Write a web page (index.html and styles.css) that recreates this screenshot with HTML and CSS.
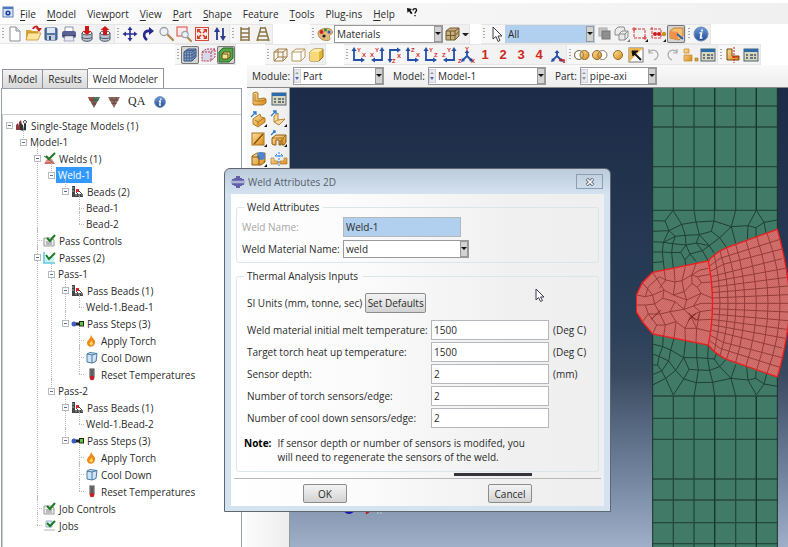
FILE: index.html
```html
<!DOCTYPE html>
<html lang="en">
<head>
  <meta charset="UTF-8">
  <title>Weld Modeler</title>
  <meta name="viewport" content="width=device-width, initial-scale=1.0">
  <link rel="stylesheet" href="styles.css">
</head>
<body>
  <!-- icon sheet -->
  <svg class="sheet" width="0" height="0" aria-hidden="true">
    <defs>
      <linearGradient id="gold" x1="0" y1="0" x2="1" y2="1">
        <stop offset="0" stop-color="#ffe0a0"/><stop offset="1" stop-color="#d98a14"/>
      </linearGradient>
      <linearGradient id="steel" x1="0" y1="0" x2="0" y2="1">
        <stop offset="0" stop-color="#6f9bd8"/><stop offset="1" stop-color="#1f4a94"/>
      </linearGradient>
      <pattern id="dots" width="6" height="6" patternUnits="userSpaceOnUse">
        <rect width="6" height="6" fill="#d5706c"/><rect width="3" height="3" fill="#c96966"/><rect x="3" y="3" width="3" height="3" fill="#c96966"/>
      </pattern>
    </defs>
    <symbol id="i-app" viewBox="0 0 12 12"><rect x="1" y="1" width="10" height="10" fill="#d5e4f4" stroke="#5c7fb8"/><rect x="1" y="1" width="10" height="2" fill="#4c78c0"/><circle cx="6" cy="7" r="2.600" fill="#1e3fa0"/><circle cx="6" cy="7" r=".9" fill="#fff"/></symbol>
    <symbol id="i-whats" viewBox="0 0 12 12"><path d="M1 2l5 1-1.500 1.300 2 3-1.500 1-2-3L1.500 7z" fill="#111"/><path d="M7 4.500C7 2 11 2 10.500 4.500 10 6 9 6 9 7.500M9 9v1.200" fill="none" stroke="#111" stroke-width="1.400"/></symbol>
    <symbol id="i-new" viewBox="0 0 18 18"><path d="M4 2h6l4 4v10H4z" fill="#fff" stroke="#8a8f98"/><path d="M10 2v4h4" fill="#dde" stroke="#8a8f98"/></symbol>
    <symbol id="i-open" viewBox="0 0 18 18"><path d="M2 5h5l1 1h6v9H2z" fill="#d9a336"/><path d="M4 8h13l-3 7H2z" fill="#ffe7a0" stroke="#c08a1c" stroke-width=".7"/><path d="M9 4c1-3 4-3 5-1" fill="none" stroke="#c81e1e" stroke-width="2"/><path d="M12 3h6l-3 4z" fill="#c81e1e"/></symbol>
    <symbol id="i-save" viewBox="0 0 18 18"><rect x="3" y="3" width="12" height="12" rx="1" fill="#5576a8" stroke="#34527f"/><rect x="5" y="3" width="8" height="5" fill="#dfe7f2"/><rect x="5" y="10" width="8" height="5" fill="#c3cedd"/><rect x="7" y="11" width="2" height="4" fill="#34527f"/></symbol>
    <symbol id="i-print" viewBox="0 0 18 18"><path d="M5 2h8v5H5z" fill="#fff" stroke="#8890a4"/><rect x="2" y="6" width="14" height="7" rx="2" fill="#5b6196"/><rect x="3" y="10" width="12" height="1" fill="#2f3562"/><path d="M5 11h8l1 5H4z" fill="#e8ebf4" stroke="#8890a4" stroke-width=".7"/></symbol>
    <symbol id="i-dbdown" viewBox="0 0 18 18"><path d="M4 8v6c0 3 10 3 10 0V8" fill="#bcc4cf" stroke="#4b5666"/><ellipse cx="9" cy="8" rx="5" ry="2" fill="#eee" stroke="#4b5666"/><path d="M4 12c0 2 10 2 10 0" fill="none" stroke="#4b5666"/><path d="M7 1h4v5h2.500L9 10 4.500 6H7z" fill="#d01818"/></symbol>
    <symbol id="i-dbup" viewBox="0 0 18 18"><path d="M4 8v6c0 3 10 3 10 0V8" fill="#bcc4cf" stroke="#4b5666"/><ellipse cx="9" cy="8" rx="5" ry="2" fill="#eee" stroke="#4b5666"/><path d="M4 12c0 2 10 2 10 0" fill="none" stroke="#4b5666"/><path d="M7 10h4V5h2.500L9 1 4.500 5H7z" fill="#d01818"/></symbol>
    <symbol id="i-pan" viewBox="0 0 18 18"><path d="M9 4v10M4 9h10" stroke="#2b2f9a" stroke-width="1.600"/><path d="M9 1.500L11.500 5h-5zM9 16.500L6.500 13h5zM1.500 9L5 6.500v5zM16.500 9L13 11.500v-5z" fill="#2b2f9a"/></symbol>
    <symbol id="i-rotate" viewBox="0 0 18 18"><path d="M8 15C3 11 5 5 11 6" fill="none" stroke="#252a8c" stroke-width="2.600"/><path d="M10 2l5 4-5 4z" fill="#252a8c"/></symbol>
    <symbol id="i-zoom" viewBox="0 0 18 18"><path d="M10 9l6 6" stroke="#b08b54" stroke-width="2.400" stroke-linecap="round"/><circle cx="7" cy="6.500" r="4" fill="#eef3f8" stroke="#9aa1aa" stroke-width="1.300"/></symbol>
    <symbol id="i-zoombox" viewBox="0 0 18 18"><rect x="2" y="2" width="10" height="9" fill="#fbeaea" stroke="#d64a3c"/><path d="M12 12l4 4" stroke="#b08b54" stroke-width="2.200" stroke-linecap="round"/><circle cx="10" cy="9.500" r="3.200" fill="#eef3f8" stroke="#9aa1aa" stroke-width="1.200"/></symbol>
    <symbol id="i-fit" viewBox="0 0 18 18"><rect x="2.500" y="2.500" width="13" height="13" fill="#fbeae6" stroke="#d64a3c"/><path d="M5 5l3 3M13 5l-3 3M5 13l3-3M13 13l-3-3" stroke="#d43a26" stroke-width="1.500"/><path d="M4 4h4L4 8zM14 4h-4l4 4zM4 14h4l-4-4zM14 14h-4l4-4z" fill="#d43a26"/></symbol>
    <symbol id="i-updown" viewBox="0 0 18 18"><path d="M6 15V6M12 3v9" stroke="#2b3a8c" stroke-width="1.800"/><path d="M6 2l3 5H3zM12 16l-3-5h6z" fill="#2b3a8c"/></symbol>
    <symbol id="i-ladder" viewBox="0 0 18 18"><path d="M5 2v14M13 2v14M5 4h8M5 8h8M5 12h8M5 15h8" stroke="#8a7544" stroke-width="1.500"/></symbol>
    <symbol id="i-ladder2" viewBox="0 0 18 18"><path d="M7 2L3 16M11 2l4 14M6.500 3h5M5.500 7h7M4.500 11h9M3.500 15h11" stroke="#8a7544" stroke-width="1.500"/></symbol>
    <symbol id="i-palette" viewBox="0 0 18 18"><path d="M2 8C2 3 16 1 16.500 7c.3 3-3 1.500-3 3.500 0 3 2 5-3 5C5 15.500 2 12 2 8z" fill="#e2b978" stroke="#9a713a" stroke-width=".7"/><circle cx="5.500" cy="7" r="2" fill="#cf2222"/><circle cx="9.500" cy="5" r="1.600" fill="#2a9a38"/><circle cx="13" cy="7" r="1.500" fill="#2c56c8"/><circle cx="8" cy="11" r="1.600" fill="#222"/></symbol>
    <symbol id="i-cube-brown" viewBox="0 0 18 18"><path d="M3 6l4-3h9v8l-4 4H3z" fill="#c9ad7c" stroke="#6f5a33"/><path d="M3 6h9v9M12 6l4-3M7.500 6v9M3 10.500h9l4-4" fill="none" stroke="#6f5a33"/></symbol>
    <symbol id="i-arrow" viewBox="0 0 18 18"><path d="M6 2v12l3-2.500 2 5 2-1-2-4.500h4z" fill="#fff" stroke="#3c3c48"/></symbol>
    <symbol id="i-overlap" viewBox="0 0 18 18"><rect x="4" y="3" width="8" height="8" fill="#c6c6c6" stroke="#aaa"/><rect x="7" y="6" width="8" height="8" fill="#8f8f8f" stroke="#777"/></symbol>
    <symbol id="i-cubes-grey" viewBox="0 0 18 18"><path d="M2 5l3-3h6l1 3v5H2z" fill="#ebebeb" stroke="#8c8c8c"/><path d="M6 9l3-3h6v6l-3 3H6z" fill="#ebebeb" stroke="#8c8c8c"/><path d="M6 9h6v6M12 9l3-3" fill="none" stroke="#8c8c8c"/><path d="M17 14v3h-3z" fill="#777"/></symbol>
    <symbol id="i-selrect" viewBox="0 0 18 18"><rect x="3" y="4" width="11" height="9" fill="none" stroke="#d43a3a" stroke-dasharray="3 1"/><path d="M1 4h4M3 2v4M12 13h4M14 11v4" stroke="#d43a3a"/><path d="M17 14v3h-3z" fill="#111"/></symbol>
    <symbol id="i-seldots" viewBox="0 0 18 18"><path d="M3 2v12M1 4h11v9H3" fill="none" stroke="#d43a3a" stroke-dasharray="3 1"/><circle cx="6" cy="9" r="2" fill="#d01818"/><circle cx="10" cy="9" r="2" fill="#d01818"/><circle cx="15" cy="9" r="2.200" fill="#c79222"/><path d="M17 14v3h-3z" fill="#111"/></symbol>
    <symbol id="i-pick" viewBox="0 0 18 18"><path d="M3 6l4-3h9v8l-4 4-9-2z" fill="#f7bf6b" stroke="#b06f16" stroke-width=".8"/><path d="M3 6l8 1v8l-8-2z" fill="#f2924a"/><path d="M10 9l6 5" stroke="#2a62b8" stroke-width="2"/></symbol>
    <symbol id="i-info" viewBox="0 0 18 18"><circle cx="9" cy="9" r="7" fill="url(#steel)" stroke="#6b88b4"/><path d="M10 4.500v2M7.500 8h2l-1 5h2" fill="none" stroke="#fff" stroke-width="1.700"/></symbol>
    <symbol id="i-cube-mesh" viewBox="0 0 18 18"><path d="M3 6l4-3h8v8l-4 4H3z" fill="#8ea9cf" stroke="#35507f"/><path d="M3 6h8v9M11 6l4-3M5.700 6v9M8.300 6v9M3 9h8l4-3M3 12h8l4-3M5 4.500h8v8" fill="none" stroke="#35507f" stroke-width=".8"/></symbol>
    <symbol id="i-cube-red" viewBox="0 0 18 18"><path d="M3 6l4-3h9v8l-4 4H3z" fill="#d6d9ea" stroke="#c63a4c" stroke-dasharray="2 1"/><path d="M3 6h9v9M12 6l4-3" fill="none" stroke="#c63a4c" stroke-dasharray="2 1"/></symbol>
    <symbol id="i-cube-green" viewBox="0 0 18 18"><path d="M2 6l4-4h10v10l-4 4H2z" fill="#54a84a" stroke="#20641e"/><path d="M5 8l2-2h6v5l-2 2H5z" fill="#f2e48a" stroke="#5c4a14"/><path d="M5 8h6v5" fill="none" stroke="#5c4a14"/></symbol>
    <symbol id="i-wire" viewBox="0 0 18 18"><path d="M3 6h9v9H3zM7 3h9v8H7zM3 6l4-3M12 6l4-3M12 15l4-4M3 15l4-4" fill="none" stroke="#a07c3c"/></symbol>
    <symbol id="i-hidden" viewBox="0 0 18 18"><path d="M3 6l4-3h9v8l-4 4H3z" fill="#fff" stroke="#b8975a"/><path d="M3 6h9v9M12 6l4-3" fill="none" stroke="#b8975a"/></symbol>
    <symbol id="i-shaded" viewBox="0 0 18 18"><path d="M3 6l4-3h9v8l-4 4H3z" fill="#e0b53c" stroke="#94701a"/><path d="M3 6h9v9H3z" fill="#f9d977"/><path d="M3 6l4-3h9l-4 3z" fill="#fdeaa4"/></symbol>
    <symbol id="i-ax-ur" viewBox="0 0 18 18"><path d="M4 4v10h7" fill="none" stroke="#2450a8" stroke-width="1.800"/><path d="M4 1l2.500 4h-5zM15 14l-4 2.500v-5z" fill="#2450a8"/></symbol>
    <symbol id="i-ax-ul" viewBox="0 0 18 18"><path d="M14 4v10H7" fill="none" stroke="#2450a8" stroke-width="1.800"/><path d="M14 1l2.500 4h-5zM3 14l4 2.500v-5z" fill="#2450a8"/></symbol>
    <symbol id="i-ax-dr" viewBox="0 0 18 18"><path d="M4 14V4h7" fill="none" stroke="#2450a8" stroke-width="1.800"/><path d="M4 17l2.500-4h-5zM15 4l-4 2.500v-5z" fill="#2450a8"/></symbol>
    <symbol id="i-iso" viewBox="0 0 18 18"><path d="M9 6v4l-4 4M9 10l4 4" fill="none" stroke="#2450a8" stroke-width="1.800"/><path d="M9 4l2.500 3h-5zM3 16l1-4 3 3zM15 16l-4-1 3-3z" fill="#2450a8"/></symbol>
    <symbol id="i-both" viewBox="0 0 18 18"><circle cx="6" cy="9" r="4.500" fill="#fff" stroke="#8a7c5c"/><circle cx="11.500" cy="9" r="4.500" fill="url(#gold)" stroke="#8a6a2c"/><circle cx="6" cy="9" r="4.500" fill="none" stroke="#8a7c5c"/></symbol>
    <symbol id="i-remove" viewBox="0 0 18 18"><circle cx="11.500" cy="9" r="4.500" fill="#fff" stroke="#8a7c5c"/><circle cx="6" cy="9" r="4.500" fill="url(#gold)" stroke="#8a6a2c"/><path d="M9 5.500c-3 2-3 5 0 7" fill="none" stroke="#8a7c5c"/></symbol>
    <symbol id="i-one" viewBox="0 0 18 18"><circle cx="9" cy="9" r="4.500" fill="url(#gold)" stroke="#9a6c1c"/></symbol>
    <symbol id="i-replace" viewBox="0 0 18 18"><rect x="2" y="2" width="14" height="14" fill="#fff" stroke="#777"/><path d="M2 2h14L2 16z" fill="#eab24c"/><path d="M7 7l7 7" stroke="#111" stroke-width="2"/><path d="M5 5h6l-3 2-2 3z" fill="#111" stroke="#111"/></symbol>
    <symbol id="i-undo" viewBox="0 0 18 18"><path d="M4 6c4-4 9-1 9 3 0 3-2 4-4 5M4 3v4h4" fill="none" stroke="#a9a9a9" stroke-width="1.200"/></symbol>
    <symbol id="i-redo" viewBox="0 0 18 18"><path d="M14 6c-4-4-9-1-9 3 0 3 2 4 4 5M14 3v4h-4" fill="none" stroke="#a9a9a9" stroke-width="1.200"/></symbol>
    <symbol id="i-partset" viewBox="0 0 18 18"><path d="M3 3h5v4H3zM3 9h8v6H3z" fill="url(#gold)" stroke="#c08428" stroke-width=".7"/><rect x="14" y="12" width="3" height="3" fill="#d8a040" stroke="#a87420" stroke-width=".6"/></symbol>
    <symbol id="i-table" viewBox="0 0 18 18"><rect x="2" y="3" width="14" height="12" fill="#d8d6bc" stroke="#4f6275"/><rect x="2" y="3" width="14" height="3" fill="#2c6cab"/><path d="M4 9h2M4 12h2M8 9h3M12 9h2M8 12h3M12 12h2" stroke="#40556c" stroke-width="1.400"/></symbol>
    <symbol id="i-section" viewBox="0 0 18 18"><path d="M3 3h5v7h7v4H3z" fill="url(#gold)" stroke="#714d10"/><path d="M10 1v16" stroke="#d01818" stroke-dasharray="2 1"/><path d="M8 11h7" stroke="#d01818"/></symbol>
    <symbol id="i-part" viewBox="0 0 18 18"><path d="M3 3l3-1 2 1v6l6-1 2 1v4l-3 2H4l-1-1z" fill="url(#gold)" stroke="#9a6614" stroke-width=".8"/><path d="M5 4v7h8M13 11l3-2" fill="none" stroke="#9a6614" stroke-width=".7"/></symbol>
    <symbol id="i-extrude" viewBox="0 0 18 18"><path d="M3 9l7-5 1 3 4 1v4l-7 5-5-3z" fill="url(#gold)" stroke="#9a6614" stroke-width=".8"/><path d="M5 10l3 2 6-4M8 12v3" fill="none" stroke="#9a6614" stroke-width=".8"/><path d="M1 7l5-5M3 2h3v3" fill="none" stroke="#2a7ad0" stroke-width="1.300"/><path d="M17 14v3h-3z" fill="#111"/></symbol>
    <symbol id="i-shell" viewBox="0 0 18 18"><path d="M4 6l4-3v7l7-1-6 6-5-3z" fill="#f8d9a0" stroke="#b07a28" stroke-width=".9"/><path d="M4 12l4-2" stroke="#b07a28" stroke-width=".8"/><path d="M1 6l5-5M3 1h3v3" fill="none" stroke="#2a7ad0" stroke-width="1.300"/><path d="M17 14v3h-3z" fill="#111"/></symbol>
    <symbol id="i-wireline" viewBox="0 0 18 18"><rect x="2" y="3" width="12" height="12" fill="url(#gold)" stroke="#a87420"/><path d="M4 14L13 4" stroke="#7c4d08" stroke-width="1.200"/><path d="M17 14v3h-3z" fill="#111"/></symbol>
    <symbol id="i-cut" viewBox="0 0 18 18"><path d="M2 8l4-3h10v7l-2 3h-2v-5h-1v5H9v-5H6v5H4l-2-1z" fill="url(#gold)" stroke="#85540c" stroke-width=".9"/><path d="M2 8h11l3-3M13 8v2" fill="none" stroke="#85540c" stroke-width=".7"/><path d="M1 5l4-4M3 1h2v2" fill="none" stroke="#2a7ad0" stroke-width="1.300"/><path d="M17 14v3h-3z" fill="#111"/></symbol>
    <symbol id="i-round" viewBox="0 0 18 18"><path d="M2 6l5-3h8v9l-4 3H2z" fill="url(#gold)" stroke="#85540c" stroke-width=".9"/><circle cx="11" cy="6" r="4" fill="#4f86cf"/><path d="M2 7h7v8" fill="none" stroke="#85540c"/><path d="M17 14v3h-3z" fill="#111"/></symbol>
    <symbol id="i-mirror" viewBox="0 0 18 18"><path d="M1 8h3v3h4v3H1zM17 8h-3v3h-4v3h7z" fill="url(#gold)" stroke="#b07a28" stroke-width=".7"/><path d="M9 2v15" stroke="#2a8ae0" stroke-dasharray="2 1"/><path d="M5 6h8M5 6l2-2M13 6l-2-2" fill="none" stroke="#2a8ae0"/></symbol>
    <symbol id="i-tri1" viewBox="0 0 12 12"><path d="M0 1h12L6 12z" fill="#7c5a50"/><path d="M0 1h5l1 4H2z" fill="#a34a44"/><path d="M6 1h6L9 6H6z" fill="#3f7f5c"/><path d="M4 8h4M1.500 4h9" stroke="#4c3a36" stroke-width=".7"/></symbol>
    <symbol id="i-tri2" viewBox="0 0 12 12"><path d="M0 1h12L6 12z" fill="#8e6a60"/><path d="M1.500 4h9M3.500 7.500h5M4 1v3M8 1v3M6 4v4" stroke="#5c4038" stroke-width=".7"/></symbol>
    <symbol id="i-models" viewBox="0 0 13 13"><path d="M1 11V6l2-2 1 3V3l2-2 1 5v5z" fill="#8a3a40"/><path d="M5 11V4l3 2 1 6zM9 5h2v6H9z" fill="#333"/><path d="M10 1.500a1.500 1.500 0 1 1-.1 0M10 4.500v7" fill="none" stroke="#333"/></symbol>
    <symbol id="i-weld" viewBox="0 0 13 13"><path d="M1 12l3-5h5l3 5z" fill="#e08a84"/><path d="M2 11h9" stroke="#c2504a"/><path d="M1 4l8 6" stroke="#666"/><path d="M3 4l3 3 6-6" fill="none" stroke="#1c7a22" stroke-width="2"/></symbol>
    <symbol id="i-beads" viewBox="0 0 13 13"><path d="M1 1h3v8h8v3H1z" fill="#444"/><path d="M1 3h2M1 6h2M5 11v-2M8 11v-2M11 11v-2" stroke="#ccc" stroke-width=".8"/><rect x="5" y="4" width="3" height="3" fill="#e02828"/><path d="M7 5l4 4M5 7l2 2" stroke="#444"/></symbol>
    <symbol id="i-controls" viewBox="0 0 13 13"><path d="M1 4h8l2 2v6H1z" fill="#eee" stroke="#999"/><path d="M3 8h6M3 10h6" stroke="#888"/><path d="M4 4l3 3 5-6" fill="none" stroke="#1c7a22" stroke-width="2"/></symbol>
    <symbol id="i-passes" viewBox="0 0 13 13"><path d="M1 1v11h11" fill="none" stroke="#5cc8dc" stroke-width="1.600"/><path d="M2 6h9v5H2z" fill="#c9f0f6"/><path d="M3 4l3 4 6-6" fill="none" stroke="#1c7a22" stroke-width="2"/></symbol>
    <symbol id="i-jobs" viewBox="0 0 13 13"><path d="M3 2h6v6H3z" fill="#def" stroke="#9ab"/><path d="M1 10h11v2H1z" fill="#d8d8d8"/><path d="M4 4l3 3 5-5" fill="none" stroke="#1c7a22" stroke-width="2"/></symbol>
    <symbol id="i-steps" viewBox="0 0 13 13"><circle cx="3" cy="7" r="2.500" fill="#3c5ec0"/><path d="M5 7h4" stroke="#222" stroke-width="3"/><rect x="8.500" y="4.500" width="4" height="4.500" fill="#5cc83c" stroke="#222"/></symbol>
    <symbol id="i-torch" viewBox="0 0 13 13"><path d="M6 0c0 4 5 5 4 9-1 5-8 5-8 0C2 6 6 5 6 0z" fill="#ee8a18"/><path d="M6.500 6c0 2 2 3 1.500 4-.7 1.500-3 1.500-3.500 0C4 9 6.500 8 6.500 6z" fill="#ffd860"/></symbol>
    <symbol id="i-cool" viewBox="0 0 13 13"><path d="M2 3l3-1.500 7 1-1 8-4 1.500-5-1z" fill="#cfe4f4" stroke="#4a7aa4"/><path d="M2 3l5 1 5-1.500M7 4v8" fill="none" stroke="#4a7aa4"/></symbol>
    <symbol id="i-reset" viewBox="0 0 13 13"><rect x="5" y="1" width="4" height="8" fill="#999" stroke="#444"/><path d="M6 3h2M6 5h2M6 7h2" stroke="#222"/><circle cx="7" cy="10" r="2.300" fill="#c82020"/></symbol>
  </svg>

  <nav class="menubar">
    <svg class="app-icon"><use href="#i-app"/></svg>
    <button><u>F</u>ile</button>
    <button><u>M</u>odel</button>
    <button>Vie<u>w</u>port</button>
    <button><u>V</u>iew</button>
    <button><u>P</u>art</button>
    <button><u>S</u>hape</button>
    <button>Fea<u>t</u>ure</button>
    <button><u>T</u>ools</button>
    <button>Plu<u>g</u>-ins</button>
    <button><u>H</u>elp</button>
    <button aria-label="What's this"><svg class="app-icon"><use href="#i-whats"/></svg></button>
  </nav>

  <div class="toolbar">
    <div class="group">
      <button class="tool" aria-label="New"><svg><use href="#i-new"/></svg></button>
      <button class="tool" aria-label="Open"><svg><use href="#i-open"/></svg></button>
      <button class="tool" aria-label="Save"><svg><use href="#i-save"/></svg></button>
      <button class="tool" aria-label="Print"><svg><use href="#i-print"/></svg></button>
      <button class="tool" aria-label="Import"><svg><use href="#i-dbdown"/></svg></button>
      <button class="tool" aria-label="Export"><svg><use href="#i-dbup"/></svg></button>
    </div>
    <div class="group">
      <button class="tool" aria-label="Pan"><svg><use href="#i-pan"/></svg></button>
      <button class="tool" aria-label="Rotate"><svg><use href="#i-rotate"/></svg></button>
      <button class="tool" aria-label="Magnify"><svg><use href="#i-zoom"/></svg></button>
      <button class="tool" aria-label="Box zoom"><svg><use href="#i-zoombox"/></svg></button>
      <button class="tool" aria-label="Auto-fit"><svg><use href="#i-fit"/></svg></button>
      <button class="tool" aria-label="Cycle views"><svg><use href="#i-updown"/></svg></button>
    </div>
    <div class="group">
      <button class="tool" aria-label="Perspective off"><svg><use href="#i-ladder"/></svg></button>
      <button class="tool" aria-label="Perspective on"><svg><use href="#i-ladder2"/></svg></button>
    </div>
    <div class="group group-color">
      <button class="tool" aria-label="Color code"><svg><use href="#i-palette"/></svg></button>
      <div class="combo combo-color">
        <select aria-label="Color mapping"><option>Materials</option></select>
        <span class="caret"></span>
      </div>
      <button class="tool" aria-label="Translucency"><svg><use href="#i-cube-brown"/></svg></button>
      <button class="drop" aria-label="Translucency menu"></button>
    </div>
    <div class="group group-select">
      <button class="tool" aria-label="Select"><svg><use href="#i-arrow"/></svg></button>
      <div class="combo combo-all">
        <select aria-label="Selection filter"><option>All</option></select>
        <span class="caret"></span>
      </div>
      <button class="tool" aria-label="Overlap"><svg><use href="#i-overlap"/></svg></button>
      <button class="tool" aria-label="Highlight"><svg><use href="#i-cubes-grey"/></svg></button>
      <button class="tool" aria-label="Rectangle"><svg><use href="#i-selrect"/></svg></button>
      <button class="tool" aria-label="Inside"><svg><use href="#i-seldots"/></svg></button>
      <button class="tool on" aria-label="Closest"><svg><use href="#i-pick"/></svg></button>
    </div>
    <div class="group">
      <button class="tool" aria-label="Query"><svg><use href="#i-info"/></svg></button>
    </div>
  </div>

  <div class="toolbar toolbar-view">
    <div class="group">
      <button class="tool on" aria-label="Mesh"><svg><use href="#i-cube-mesh"/></svg></button>
      <button class="tool" aria-label="Edges"><svg><use href="#i-cube-red"/></svg></button>
      <button class="tool on" aria-label="Faces"><svg><use href="#i-cube-green"/></svg></button>
    </div>
    <div class="group group-render">
      <button class="tool" aria-label="Wireframe"><svg><use href="#i-wire"/></svg></button>
      <button class="tool" aria-label="Hidden"><svg><use href="#i-hidden"/></svg></button>
      <button class="tool" aria-label="Shaded"><svg><use href="#i-shaded"/></svg></button>
    </div>
    <div class="group group-axes">
      <button class="tool"><svg viewBox="0 0 18 18"><use href="#i-ax-ur"/><text x="7" y="6">Y</text><text x="12" y="11">X</text></svg></button>
      <button class="tool"><svg viewBox="0 0 18 18"><use href="#i-ax-ul"/><text x="7" y="6">Y</text><text x="2" y="11">X</text></svg></button>
      <button class="tool"><svg viewBox="0 0 18 18"><use href="#i-ax-dr"/><text x="11" y="12">X</text><text x="6" y="17">Z</text></svg></button>
      <button class="tool"><svg viewBox="0 0 18 18"><use href="#i-ax-ur"/><text x="7" y="6">Z</text><text x="12" y="11">X</text></svg></button>
      <button class="tool"><svg viewBox="0 0 18 18"><use href="#i-ax-ur"/><text x="7" y="6">Y</text><text x="12" y="11">Z</text></svg></button>
      <button class="tool"><svg viewBox="0 0 18 18"><use href="#i-ax-ul"/><text x="7" y="6">Y</text><text x="2" y="11">Z</text></svg></button>
      <button class="tool"><svg viewBox="0 0 18 18"><use href="#i-iso"/><text x="7" y="5">Y</text><text x="0" y="17">Z</text><text x="13" y="17">X</text></svg></button>
      <button class="tool num">1</button>
      <button class="tool num">2</button>
      <button class="tool num">3</button>
      <button class="tool num">4</button>
      <button class="tool" aria-label="Save view"><svg viewBox="0 0 18 18"><use href="#i-iso"/><path d="M11 14h5v3" fill="none" stroke="#d01818" stroke-width="1.500"/></svg></button>
    </div>
    <div class="group">
      <button class="tool" aria-label="Add"><svg><use href="#i-both"/></svg></button>
      <button class="tool" aria-label="Remove"><svg><use href="#i-remove"/></svg></button>
      <button class="tool" aria-label="Either"><svg><use href="#i-one"/></svg></button>
      <button class="tool" aria-label="Replace"><svg><use href="#i-replace"/></svg></button>
      <button class="tool" aria-label="Undo"><svg><use href="#i-undo"/></svg></button>
      <button class="tool" aria-label="Redo"><svg><use href="#i-redo"/></svg></button>
      <button class="tool" aria-label="Display group"><svg><use href="#i-partset"/></svg></button>
      <button class="tool" aria-label="Group manager"><svg><use href="#i-table"/></svg></button>
    </div>
    <div class="group">
      <button class="tool" aria-label="View cut"><svg><use href="#i-section"/></svg></button>
      <button class="tool" aria-label="View cut manager"><svg><use href="#i-table"/></svg></button>
    </div>
  </div>

  <main class="main">
    <aside class="side">
      <div class="tabs">
        <button class="tab">Model</button>
        <button class="tab">Results</button>
        <button class="tab active">Weld Modeler</button>
      </div>
      <div class="panel">
        <div class="filters">
          <button class="small-tool" aria-label="Show welds"><svg><use href="#i-tri1"/></svg></button>
          <button class="small-tool" aria-label="Show mesh"><svg><use href="#i-tri2"/></svg></button>
          <button class="small-tool qa">QA</button>
          <button class="small-tool about" aria-label="About"><svg><use href="#i-info"/></svg></button>
        </div>
        <ul class="tree">
          <li>
            <div class="row icon-row"><i class="box"></i><svg><use href="#i-models"/></svg><span>Single-Stage Models (1)</span></div>
            <ul>
              <li>
                <div class="row"><i class="box"></i><span>Model-1</span></div>
                <ul>
                  <li>
                    <div class="row icon-row"><i class="box"></i><svg><use href="#i-weld"/></svg><span>Welds (1)</span></div>
                    <ul>
                      <li>
                        <div class="row"><i class="box"></i><span class="selected">Weld-1</span></div>
                        <ul>
                          <li>
                            <div class="row icon-row"><i class="box"></i><svg><use href="#i-beads"/></svg><span>Beads (2)</span></div>
                            <ul>
                              <li><div class="row"><i></i><span>Bead-1</span></div></li>
                              <li><div class="row"><i></i><span>Bead-2</span></div></li>
                            </ul>
                          </li>
                        </ul>
                      </li>
                    </ul>
                  </li>
                  <li><div class="row icon-row"><i></i><svg><use href="#i-controls"/></svg><span>Pass Controls</span></div></li>
                  <li>
                    <div class="row icon-row"><i class="box"></i><svg><use href="#i-passes"/></svg><span>Passes (2)</span></div>
                    <ul>
                      <li>
                        <div class="row"><i class="box"></i><span>Pass-1</span></div>
                        <ul>
                          <li>
                            <div class="row icon-row"><i class="box"></i><svg><use href="#i-beads"/></svg><span>Pass Beads (1)</span></div>
                            <ul>
                              <li><div class="row"><i></i><span>Weld-1.Bead-1</span></div></li>
                            </ul>
                          </li>
                          <li>
                            <div class="row icon-row"><i class="box"></i><svg><use href="#i-steps"/></svg><span>Pass Steps (3)</span></div>
                            <ul>
                              <li><div class="row icon-row"><i></i><svg><use href="#i-torch"/></svg><span>Apply Torch</span></div></li>
                              <li><div class="row icon-row"><i></i><svg><use href="#i-cool"/></svg><span>Cool Down</span></div></li>
                              <li><div class="row icon-row"><i></i><svg><use href="#i-reset"/></svg><span>Reset Temperatures</span></div></li>
                            </ul>
                          </li>
                        </ul>
                      </li>
                      <li>
                        <div class="row"><i class="box"></i><span>Pass-2</span></div>
                        <ul>
                          <li>
                            <div class="row icon-row"><i class="box"></i><svg><use href="#i-beads"/></svg><span>Pass Beads (1)</span></div>
                            <ul>
                              <li><div class="row"><i></i><span>Weld-1.Bead-2</span></div></li>
                            </ul>
                          </li>
                          <li>
                            <div class="row icon-row"><i class="box"></i><svg><use href="#i-steps"/></svg><span>Pass Steps (3)</span></div>
                            <ul>
                              <li><div class="row icon-row"><i></i><svg><use href="#i-torch"/></svg><span>Apply Torch</span></div></li>
                              <li><div class="row icon-row"><i></i><svg><use href="#i-cool"/></svg><span>Cool Down</span></div></li>
                              <li><div class="row icon-row"><i></i><svg><use href="#i-reset"/></svg><span>Reset Temperatures</span></div></li>
                            </ul>
                          </li>
                        </ul>
                      </li>
                    </ul>
                  </li>
                  <li><div class="row icon-row"><i></i><svg><use href="#i-controls"/></svg><span>Job Controls</span></div></li>
                  <li><div class="row icon-row"><i></i><svg><use href="#i-jobs"/></svg><span>Jobs</span></div></li>
                </ul>
              </li>
            </ul>
          </li>
        </ul>
      </div>
    </aside>

    <section class="work">
      <div class="context">
        <label for="module">Module:</label>
        <div class="combo combo-module"><i class="spin"></i><select id="module"><option>Part</option></select><span class="caret"></span></div>
        <label for="model">Model:</label>
        <div class="combo combo-model"><i class="spin"></i><select id="model"><option>Model-1</option></select><span class="caret"></span></div>
        <label for="part">Part:</label>
        <div class="combo combo-part"><i class="spin off"></i><select id="part"><option>pipe-axi</option></select><span class="caret"></span></div>
      </div>
      <div class="stage">
        <div class="toolbox">
          <button class="tool" aria-label="Create part"><svg><use href="#i-part"/></svg></button>
          <button class="tool" aria-label="Part manager"><svg><use href="#i-table"/></svg></button>
          <button class="tool" aria-label="Solid extrude"><svg><use href="#i-extrude"/></svg></button>
          <button class="tool" aria-label="Shell extrude"><svg><use href="#i-shell"/></svg></button>
          <button class="tool" aria-label="Wire"><svg><use href="#i-wireline"/></svg></button>
          <button class="tool" aria-label="Cut"><svg><use href="#i-cut"/></svg></button>
          <button class="tool" aria-label="Round"><svg><use href="#i-round"/></svg></button>
          <button class="tool" aria-label="Mirror"><svg><use href="#i-mirror"/></svg></button>
        </div>
        <div class="viewport">
          <svg class="triad" viewBox="0 0 44 12"><circle cx="9" cy="3" r="5" fill="none" stroke="#1414b4" stroke-width="2"/><path d="M26 9l6-4-4-1z" fill="#c01414" stroke="#c01414"/><path d="M38 3v6M41 3v6" stroke="#c8c8c8"/></svg>
          <svg class="mesh" viewBox="48 24 456 1377">
            <path d="M98 24H472V1401H98z" fill="#417a67"/>
            <!-- regular quads above and below the weld -->
            <g fill="none" stroke="#23483d" stroke-width="4">
              <path d="M160 24V391M222 24V391M284 24V391M347 24V391M409 24V391M98 141H472M98 260H472M98 322H472M98 391H472"/>
              <path d="M160 948V1401M222 948V1401M284 948V1401M347 948V1401M409 948V1401M98 948H472M98 1015H472M98 1078H472M98 1197H472M98 1260H472M98 1328H472M98 1391H472"/>
            </g>
            <path d="M98 78H472M284 24V391M409 24V391M284 948V1401M409 948V1401M98 24V1401M472 24V1401" fill="none" stroke="#17322a" stroke-width="3"/>
            <!-- transition elements -->
            <g fill="none" stroke="#1f4036" stroke-width="3">
              <path d="M98 422L135 423L159 391L185 433L147 452L135 423M98 454L147 452L166 469L130 487L98 485M147 452L130 487L127 516L98 516M127 516L130 545L98 548M130 545L133 570M130 487L158 491L166 469L196 466L185 433L228 426L222 391M228 426L238 464L196 466L198 495L158 491L155 518L127 516M155 518L182 517L198 495L229 489L238 464L274 454L282 423L228 426M155 518L160 565M182 517L195 540L197 558M198 495L210 522L195 540M210 522L229 545M229 489L247 512L210 522M247 512L265 543M229 489L268 497L247 512M268 497L283 520M238 464L268 497L299 473L274 454M299 473L320 503M299 473L334 440L282 423L284 391M334 440L347 391M334 440L347 490M334 440L384 437L409 391L432 427L408 443L384 437L382 478M408 443L408 470M432 427L472 420M432 427L438 458"/>
              <g transform="translate(0 660)">
                <path d="M98 132L128 140L130 108M128 140L152 150L162 115M98 162L117 169L128 140M98 195H113L117 169L146 183L152 150L191 173L197 122M113 195L125 213L98 224M125 213L146 183L167 211L191 173L230 173V130M125 213L137 235L98 255M137 235L167 211L191 237L207 208L191 173M137 235L160 285L191 237L229 248L235 210L207 208M229 248L222 288M229 248L278 247L284 288M235 210L269 211L278 247L333 235L347 288M269 211L299 200L333 235L347 194M230 173L235 210M230 173L263 175L269 211M263 175L265 135M263 175L283 177L299 200L318 178M283 177L290 160M333 235L384 240L380 202M384 240L409 285L432 252L407 235L384 240M407 235L408 212M432 252L472 259M432 252L440 222"/>
              </g>
            </g>
            <!-- weld beads -->
            <path d="M98 577L265 543Q285 518 320 503L472 448Q500 545 512 670Q500 800 472 891L320 838Q285 822 265 795L98 762L67 725L49 695V645L67 608z" fill="url(#dots)"/>
            <g fill="none" stroke="#953c3b" stroke-width="3">
              <path d="M269 558L300 535L480 478M271 574L310 553L486 507M273 590L486 536M274 606L496 565M275 622L500 592M276 638L504 618M277 654L504 644M277 670H504M277 686L504 696M276 702L504 722M275 718L500 748M274 734L496 775M273 750L486 804M271 766L310 787L486 833M269 782L300 805L480 862"/>
              <path d="M283 525Q317 670 283 815M300 513Q348 670 300 827M320 503Q376 670 320 837M347 493Q401 670 347 847M378 482Q440 670 378 858M410 470Q478 670 410 870M441 460Q519 670 441 880"/>
              <path d="M98 577L132 630L160 645L200 660L243 640L276 654M67 608L98 645L132 630M49 645L76 650L98 645L104 672L76 675H49M76 650L85 620L118 590M76 675L85 702L67 725M104 672L128 655L132 630M104 672L120 702L85 702L110 735L98 762M120 702L150 695L165 665L128 655M120 702L136 735L131 768M136 735L110 735M132 570L137 600L118 590M137 600L165 606L160 645M137 600L118 625M165 606L162 565M165 606L186 602L196 560M186 602L192 635L160 645M186 602L215 585L228 551M215 585L240 570L265 565M215 585L232 590L244 608L232 622L216 610zM232 590L270 583M244 608L274 606M232 622L243 640M216 610L192 635L200 660L192 688L165 665M192 688L150 695L168 725L136 735M168 725L162 775M168 725L195 745L196 781M192 688L212 708L195 745M192 688L221 678L243 640M221 678L243 670L277 670M221 678L240 695L212 708L232 720L240 695L275 690M212 708L230 745L195 745M230 745L228 787M230 745L270 755M232 720L276 718M240 695L230 745"/>
              <path d="M94 718L122 690M205 698L228 722M228 700L205 722" stroke="#7c1f22"/>
            </g>
            <path d="M98 577L265 543Q285 518 320 503L472 448Q500 545 512 670Q500 800 472 891L320 838Q285 822 265 795L98 762L67 725L49 695V645L67 608zM265 543Q290 670 265 795" fill="none" stroke="#ee1c1c" stroke-width="4"/>
          </svg>
        </div>
      </div>
    </section>
  </main>

  <form class="dialog" role="dialog" aria-labelledby="dialog-title">
    <div class="titlebar">
      <svg class="title-icon" viewBox="0 0 14 14"><path d="M5 1h4v2h2v1h2v2H1V4h2V3h2zM1 8h12v2h-2v1H9v2H5v-2H3v-1H1z" fill="#6160a8"/><path d="M0 6h14M0 8h14" stroke="#8f8fc4"/></svg>
      <span id="dialog-title">Weld Attributes 2D</span>
      <button type="button" class="close" aria-label="Close"><svg viewBox="0 0 12 10"><path d="M2 1l8 8M10 1L2 9" stroke="#5c6674" stroke-width="4"/><path d="M2.500 1.500l7 7M9.500 1.500l-7 7" stroke="#fff" stroke-width="2"/></svg></button>
    </div>
    <div class="dialog-body">
      <fieldset class="attrs">
        <legend>Weld Attributes</legend>
        <label for="weld-name" class="muted">Weld Name:</label>
        <input id="weld-name" class="name-input" type="text" value="Weld-1" readonly>
        <label for="weld-material">Weld Material Name:</label>
        <div class="combo combo-weld"><select id="weld-material"><option>weld</option></select><span class="caret"></span></div>
      </fieldset>
      <fieldset class="thermal">
        <legend>Thermal Analysis Inputs</legend>
        <div class="units">SI Units (mm, tonne, sec) <button type="button" class="btn btn-defaults">Set Defaults</button></div>
        <div class="fields">
          <label for="melt">Weld material initial melt temperature:</label>
          <input id="melt" type="text" value="1500"><span>(Deg C)</span>
          <label for="torch">Target torch heat up temperature:</label>
          <input id="torch" type="text" value="1500"><span>(Deg C)</span>
          <label for="depth">Sensor depth:</label>
          <input id="depth" type="text" value="2"><span>(mm)</span>
          <label for="torch-sensors">Number of torch sensors/edge:</label>
          <input id="torch-sensors" type="text" value="2"><span></span>
          <label for="cool-sensors">Number of cool down sensors/edge:</label>
          <input id="cool-sensors" type="text" value="2"><span></span>
        </div>
        <div class="note"><b>Note:</b><p>If sensor depth or number of sensors is modifed, you<br>will need to regenerate the sensors of the weld.</p></div>
      </fieldset>
      <div class="scroll-mark"></div>
      <div class="actions">
        <button type="button" class="btn">OK</button>
        <button type="button" class="btn">Cancel</button>
      </div>
    </div>
    <svg class="cursor" viewBox="0 0 10 15"><path d="M1 1v11l2.500-2.500 2 4 2-1-2-3.500H9z" fill="#fff" stroke="#3a3a55"/></svg>
  </form>
</body>
</html>
```

FILE: styles.css
```css
* {
  box-sizing: border-box;
}

body {
  margin: 0;
  height: 100vh;
  display: flex;
  flex-direction: column;
  position: relative;
  overflow: hidden;
  background: #fff;
  color: #2b2b2b;
  font: 10px/16px "Open Sans", "Noto Sans", sans-serif;
}

button, input, select {
  font: inherit;
  color: inherit;
  white-space: nowrap;
}

button {
  border: none;
  padding: 0;
  background: none;
}

.sheet {
  position: absolute;
}

/* menu */
.menubar {
  display: flex;
  align-items: center;
  gap: 11px;
  height: 21px;
  margin-top: 3px;
  padding-left: 2px;
  background: linear-gradient(to right, #fdfdfd, #f0f0f0);
}

.menubar .app-icon:first-child {
  margin-right: -5px;
  margin-bottom: 4px;
}

.app-icon {
  width: 12px;
  height: 12px;
  display: block;
}

.menubar u {
  text-underline-offset: 2px;
}

/* toolbars */
.toolbar {
  display: flex;
  flex: none;
  height: 20px;
}

.toolbar-view {
  height: 21px;
  padding-left: 175px;
}

.group {
  display: flex;
  align-items: center;
  background: linear-gradient(to right, #f8f8f8, #f0f0f0);
  border: 1px solid #e6e6e6;
  border-left: none;
}

.group::before {
  content: "";
  width: 2px;
  height: 12px;
  margin: 0 2px;
  background: repeating-linear-gradient(#a8a8a8 0 1px, transparent 1px 3px);
}

.group-color {
  margin-left: 37px;
}

.group-select {
  margin-left: 11px;
}

.group-render {
  margin-left: 29px;
}

.group-axes {
  margin-left: 18px;
}

.tool {
  width: 18px;
  height: 18px;
  flex: none;
}

.tool svg {
  width: 18px;
  height: 18px;
  display: block;
}

.tool text {
  font: bold 6px "Liberation Sans", sans-serif;
  fill: #d8281c;
}

.tool.on {
  background: #d4d4d4;
  box-shadow: inset 0 0 0 1px #777;
  border-radius: 2px;
}

.num {
  font: bold 13px "Liberation Sans", sans-serif;
  color: #d0281c;
}

.drop {
  width: 8px;
  height: 18px;
}

.drop::before {
  content: "";
  display: block;
  border: 3px solid transparent;
  border-top-color: #222;
  margin: 3px 0 0 1px;
}

.combo {
  display: flex;
  align-items: center;
  height: 18px;
  background: #fff;
  border: 1px solid #999;
}

.combo select {
  flex: 1;
  min-width: 0;
  height: 16px;
  padding: 0 2px;
  border: none;
  outline: none;
  appearance: none;
  background: none;
}

.caret {
  flex: none;
  width: 8px;
  height: 16px;
  border: 1px solid #999;
  background: #d2d2d2;
}

.caret::before {
  content: "";
  display: block;
  border: 3px solid transparent;
  border-top-color: #111;
  margin-top: 5px;
}

.combo-color {
  width: 109px;
}

.combo-all {
  width: 90px;
  border-color: #b9cde4;
  background: #b1cfee;
}

.combo-module {
  width: 91px;
}

.combo-model {
  width: 118px;
}

.combo-part {
  width: 77px;
}

.combo-weld {
  width: 126px;
}

.spin {
  width: 7px;
  height: 14px;
  background: #e9ebf2;
  border: 1px solid #d0d3dc;
}

.spin::before, .spin::after {
  content: "";
  display: block;
  width: 0;
  border: 2px solid transparent;
}

.spin::before {
  border-bottom-color: #999;
}

.spin::after {
  border-top: 3px solid #5263b8;
  margin-top: 3px;
}

.spin.off::after {
  border-top-color: #999;
}

/* left side */
.main {
  flex: 1;
  display: flex;
  min-height: 0;
}

.side {
  flex: none;
  width: 242px;
  margin-right: 5px;
  padding-top: 3px;
  display: flex;
  flex-direction: column;
}

.tabs {
  display: flex;
  flex: none;
  height: 20px;
  padding-left: 2px;
}

.tab {
  margin-top: 1px;
  padding: 0 5px;
  border: 1px solid #8f949c;
  border-bottom: none;
  background: linear-gradient(#f2f2f2, #d9d9d9);
}

.tab + .tab {
  border-left: none;
}

.tab.active {
  margin-top: 0;
  background: #fff;
}

.panel {
  flex: 1;
  border: 1px solid #9aa0aa;
  border-bottom: none;
  margin-left: 1px;
}

.filters {
  display: flex;
  align-items: center;
  gap: 8px;
  height: 26px;
  padding-left: 86px;
  border-bottom: 1px solid #c9ccd2;
}

.small-tool svg {
  display: block;
  width: 12px;
  height: 12px;
}

.about svg {
  width: 14px;
  height: 14px;
}

.qa {
  font: 12px "Liberation Serif", serif;
}

/* tree */
.tree, .tree ul {
  list-style: none;
  margin: 0;
  padding: 0;
}

.tree {
  height: 100%;
  padding: 2px 0 0 2px;
  border-left: 1px solid #c9ccd2;
}

.tree ul {
  padding-left: 14px;
}

.tree li {
  position: relative;
}

.tree ul > li::before {
  content: "";
  position: absolute;
  left: 4px;
  top: -4px;
  bottom: 0;
  border-left: 1px dotted #bbb;
}

.tree ul > li:last-child::before {
  bottom: auto;
  height: 12px;
}

.row {
  display: flex;
  align-items: center;
  position: relative;
  height: 16px;
  white-space: nowrap;
}

.icon-row {
  height: 17px;
}

.row i {
  flex: none;
  width: 9px;
  height: 0;
}

.row i:not(.box) {
  border-top: 1px dotted #bbb;
  width: 5px;
  margin-left: 4px;
}

.row .box {
  position: relative;
  width: 7px;
  height: 7px;
  margin: 0 1px;
  background: #fff;
  border: 1px solid #b4bac4;
}

.row .box::before {
  content: "";
  position: absolute;
  left: 1px;
  top: 2px;
  width: 3px;
  height: 1px;
  background: #5a6a90;
}

.row svg {
  width: 13px;
  height: 13px;
  margin: 0 1px;
}

.row span {
  padding: 0 2px;
}

.row .selected {
  background: #3399ff;
  color: #fff;
}

/* right side */
.work {
  flex: 1;
  min-width: 0;
  display: flex;
  flex-direction: column;
}

.context {
  display: flex;
  align-items: center;
  flex: none;
  height: 23px;
  padding-left: 5px;
  background: linear-gradient(#fafafa, #ededed);
  border-bottom: 1px solid #888;
}

.context label {
  margin-right: 3px;
}

.context .combo {
  margin-right: 9px;
}

.stage {
  flex: 1;
  display: flex;
  min-height: 0;
}

.toolbox {
  flex: none;
  width: 43px;
  display: grid;
  grid-template-columns: 18px 18px;
  grid-auto-rows: 18px;
  align-content: start;
  gap: 2px;
  padding: 2px 0 0 3px;
  background: linear-gradient(to right, #fbfbfb, #ededed);
  border-right: 1px solid #999;
}

.viewport {
  flex: 1;
  position: relative;
  display: flex;
  justify-content: flex-end;
  align-items: flex-start;
  overflow: hidden;
  background: linear-gradient(#1c2b47, #2b3f59 52%, #38495f 62%, #7485a0 85%, #9fafc8);
}

.mesh {
  flex: none;
  width: 152px;
  height: 459px;
}

.triad {
  position: absolute;
  left: 50px;
  top: 417px;
  width: 44px;
  height: 12px;
}

/* dialog */
.dialog {
  position: absolute;
  left: 224px;
  top: 168px;
  width: 387px;
  padding: 0 6px 5px;
  border: 1px solid #5f6670;
  border-radius: 6px 6px 0 0;
  background: linear-gradient(#bccbda, #d5e3f1 26px);
  white-space: nowrap;
}

.titlebar {
  display: flex;
  align-items: center;
  height: 25px;
  gap: 3px;
  color: #56606c;
}

.title-icon {
  width: 14px;
  height: 14px;
}

.close {
  width: 27px;
  height: 15px;
  margin: 0 1px 0 auto;
  border: 1px solid #8d9db2;
  display: grid;
  place-items: center;
}

.close svg {
  width: 10px;
  height: 8px;
}

.dialog-body {
  padding: 5px 5px 3px;
  background: linear-gradient(to right, #fff, #fbfbfb 35%, #f0f0f0 75%, #efefef);
}

fieldset {
  margin: 0;
  border: 1px solid #dbe5ea;
  border-radius: 3px;
}

legend {
  padding: 0 4px 0 3px;
}

.dialog input {
  width: 118px;
  height: 20px;
  padding: 0 2px;
  border: 1px solid #b4b8bc;
  background: #fff;
}

.attrs {
  display: grid;
  grid-template-columns: 101px 1fr;
  align-items: center;
  row-gap: 3px;
  padding: 2px 5px 4px;
}

.dialog .name-input {
  background: #b1cfee;
}

.muted {
  color: #a5a5a5;
}

.thermal {
  margin-top: 5px;
  padding: 9px 8px 7px 10px;
}

.attrs legend {
  margin-left: 2px;
}

.thermal legend {
  margin-left: -3px;
}

.units {
  display: flex;
  align-items: center;
  gap: 3px;
}

.btn {
  width: 44px;
  height: 19px;
  border: 1px solid #8c8c8c;
  border-radius: 2px;
  background: linear-gradient(#f3f3f3, #e4e4e4 50%, #d2d2d2);
}

.btn-defaults {
  width: 61px;
  height: 20px;
}

.fields {
  display: grid;
  grid-template-columns: 180px 118px 1fr;
  align-items: center;
  gap: 2px 4px;
  margin-top: 7px;
}

.note {
  display: flex;
  gap: 6px;
  margin: 8px 0 0 -3px;
  line-height: 14px;
}

.note b {
  color: #000;
}

.note p {
  margin: 0;
}

.scroll-mark {
  width: 78px;
  height: 3px;
  margin: 1px 67px 0 auto;
  background: #33343c;
}

.actions {
  display: flex;
  gap: 141px;
  margin: 2px -2px 0;
  padding: 5px 0 0 69px;
  border-top: 1px solid #b9b9b9;
}

.cursor {
  position: absolute;
  left: 310px;
  top: 119px;
  width: 10px;
  height: 15px;
}
```
